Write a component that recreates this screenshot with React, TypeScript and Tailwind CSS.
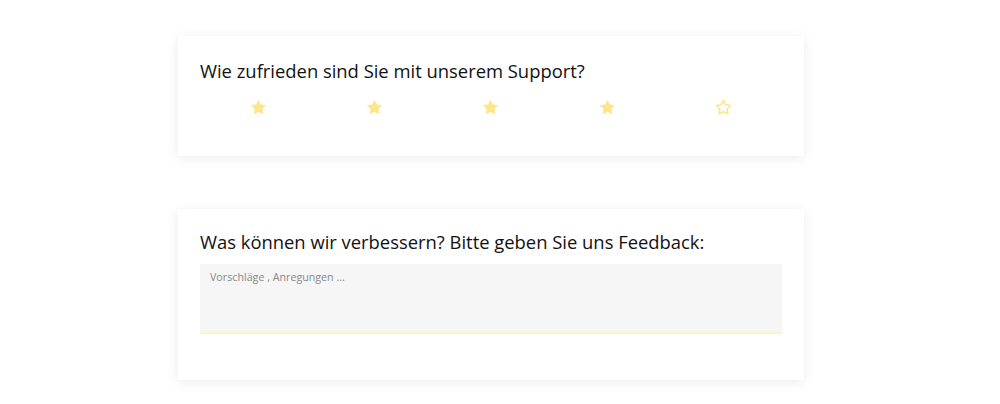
import React from 'react';

const STAR = 'M12 2l3.09 6.26L22 9.27l-5 4.87 1.18 6.88L12 17.77l-6.18 3.25L7 14.14 2 9.27l6.91-1.01L12 2z';

function Star({ filled }: { filled: boolean }) {
  return (
    <svg viewBox="0 0 24 24" className="w-[17px] h-[17px]">
      <path
        d={STAR}
        fill={filled ? '#fde68a' : 'none'}
        stroke="#fde68a"
        strokeWidth={filled ? 1 : 2.2}
        strokeLinejoin="round"
      />
    </svg>
  );
}

export default function App() {
  const rating = 4;

  return (
    <div className="min-h-[404px] bg-white pt-[36px] pr-[18px] flex flex-col items-center gap-[53px] font-['Open_Sans',sans-serif]">
      {/* Rating card */}
      <div className="w-[626px] h-[120px] bg-white px-[22px] pt-[21px] shadow-[0_2px_12px_rgba(0,0,0,0.08)]">
        <h2 className="text-[18.4px] leading-[27px] text-[#111]">Wie zufrieden sind Sie mit unserem Support?</h2>
        <div className="grid grid-cols-5 mt-[15px]">
          {[1, 2, 3, 4, 5].map((n) => (
            <div key={n} className="flex justify-center">
              <Star filled={n <= rating} />
            </div>
          ))}
        </div>
      </div>

      {/* Feedback card */}
      <div className="w-[626px] h-[171px] bg-white px-[22px] pt-[19px] shadow-[0_2px_12px_rgba(0,0,0,0.08)]">
        <h2 className="text-[18.4px] leading-[27px] text-[#111]">Was können wir verbessern? Bitte geben Sie uns Feedback:</h2>
        <textarea
          placeholder="Vorschläge , Anregungen ..."
          className="mt-[9px] block w-full h-[70px] resize-none bg-[#f6f6f6] border-b-2 border-[#fdf3c8] px-[10px] py-[5px] text-[10.7px] leading-[16px] text-[#555] placeholder:text-[#888] outline-none"
        />
      </div>
    </div>
  );
}
